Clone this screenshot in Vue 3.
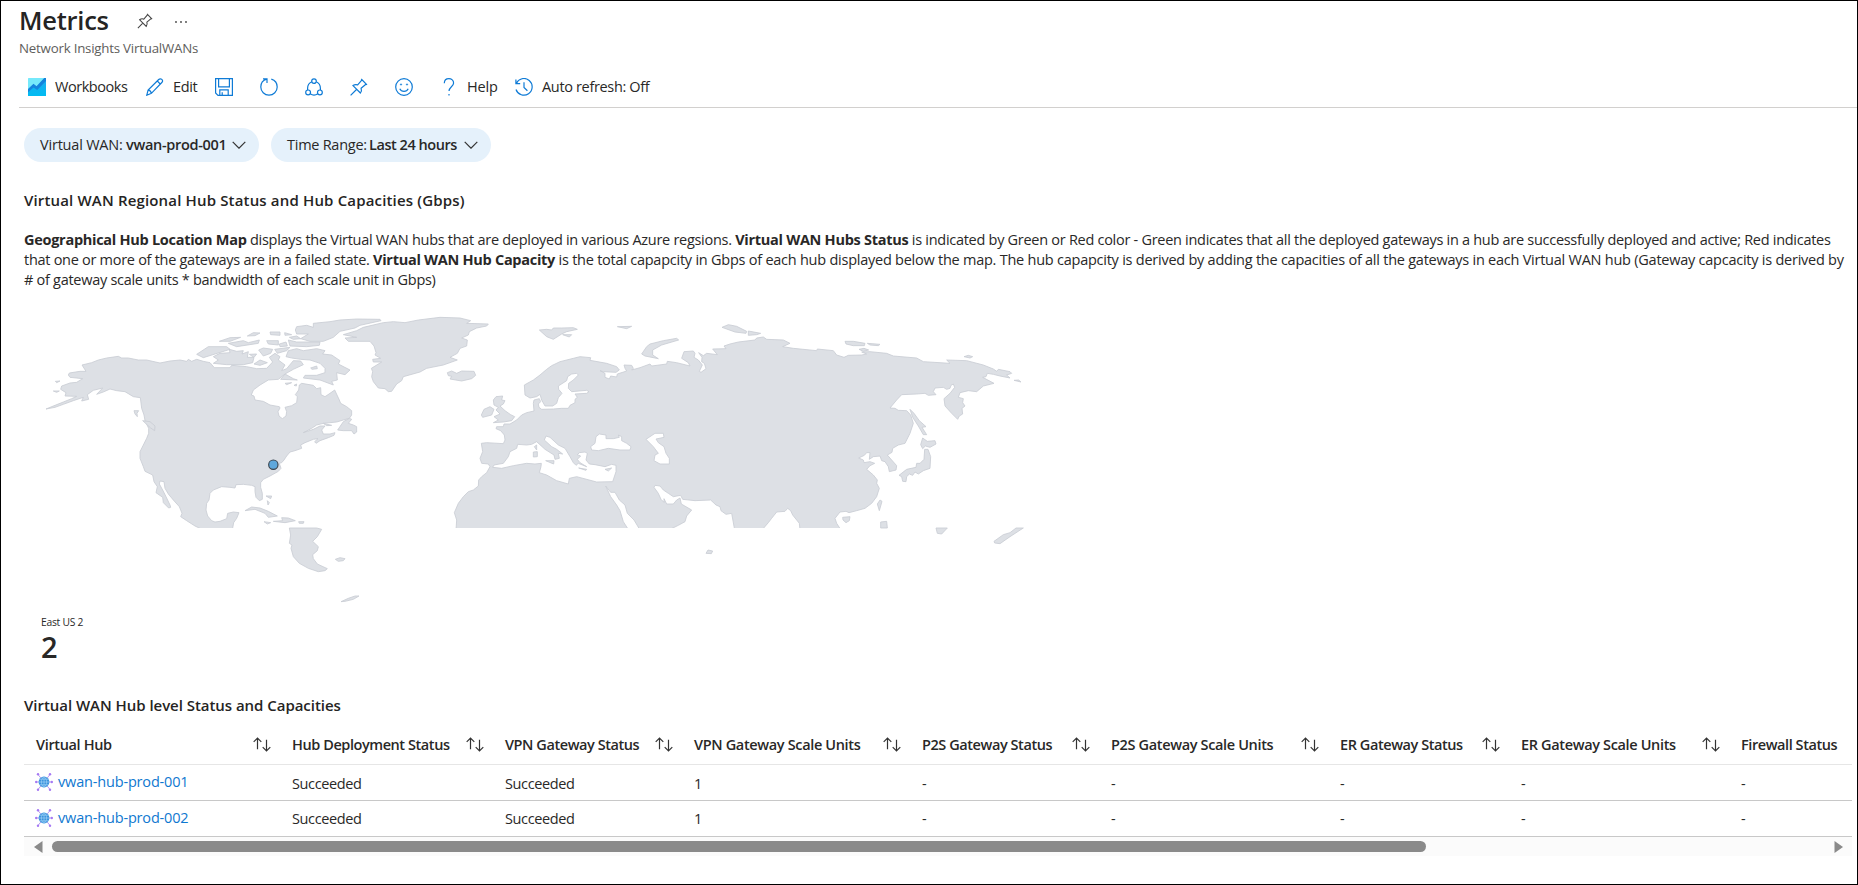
<script setup>
const columns = [
  { label: 'Virtual Hub' },
  { label: 'Hub Deployment Status', tight: true },
  { label: 'VPN Gateway Status', tight: true },
  { label: 'VPN Gateway Scale Units' },
  { label: 'P2S Gateway Status', tight: true },
  { label: 'P2S Gateway Scale Units' },
  { label: 'ER Gateway Status', tight: true },
  { label: 'ER Gateway Scale Units' },
  { label: 'Firewall Status', tight: true },
]
const rows = [
  ['vwan-hub-prod-001', 'Succeeded', 'Succeeded', '1', '-', '-', '-', '-', '-'],
  ['vwan-hub-prod-002', 'Succeeded', 'Succeeded', '1', '-', '-', '-', '-', '-'],
]

// Coastline data is kept in three regional tiles; each tile is moved into the shared map space.
const shift = (points, dx) =>
  points.trim().split(/\s+/).map((p) => {
    const [x, y] = p.split(',').map(Number)
    return `${x + dx},${y}`
  }).join(' ')
const ring = (...parts) => 'M' + parts.map(([dx, pts]) => shift(pts, dx)).join(' L') + 'Z'
const WEST = 0, MID = 930, EAST = 1830

const eurasia = ring(
  [MID, `348,690 350,660 343,638 355,610 370,590 385,575 400,570 415,558 416,540 425,530 440,518 450,500 445,492 425,490 420,475 428,455 424,430 440,428 490,431 495,420 493,405 482,392 468,386 470,380 490,380 492,372 510,372 530,360 545,345 560,338 582,333 580,310 582,300 598,296 602,305 595,312 597,322 605,328 640,327 665,325 685,325 690,316 705,308 705,298 712,292 705,282 740,280 747,275 740,271 695,275 685,265 686,250 700,240 715,225 710,220 695,222 683,230 680,242 655,258 656,268 666,280 655,293 650,310 638,318 615,318 605,300 600,283 590,290 570,294 555,285 553,255 580,240 600,225 620,208 635,197 660,185 700,175 720,170 752,173 750,181 800,190 830,200 838,210 828,217 790,215 780,212 795,220 795,232 808,237 812,228 830,231 832,222 860,213 855,205 852,195 875,196 880,205 875,210 900,203 930,192`],
  [EAST, `30,192 35,198 80,192 82,184 110,188 150,198 145,188 125,175 132,155 160,153 165,160 162,172 175,180 187,195 178,214 183,217 198,206 193,190 185,185 186,172 176,158 190,167 200,160 232,164 218,147 258,146 252,138 270,132 295,126 345,120 350,114 370,111 380,118 430,120 450,130 428,140 460,145 530,152 532,147 580,152 590,165 612,172 625,166 665,165 680,162 665,156 690,155 740,160 760,168 830,174 850,185 930,190 920,180 980,182 1030,195 1060,207 1070,214 1075,208 1110,215 1115,220 1100,225 1110,234 1080,228 1060,223 1042,220 1038,230 1028,232 1062,250 1030,258 1010,275 985,272 960,278 955,292 970,296 968,308 975,318 966,325 968,342 958,348 953,358 935,340 915,318 912,296 930,280 944,262 940,252 933,256 930,265 920,268 910,262 885,264 880,275 888,284 865,286 855,280 830,282 785,284 770,300 750,324 765,325 775,331 800,332 812,345 820,370 810,400 795,430 775,435 758,445 756,457 742,465 755,480 770,497 768,510 748,515 745,500 735,485 725,482 720,468 700,470 688,478 690,458 680,458 673,466 656,474 670,480 672,488 690,485 704,490 690,497 680,508 700,525 712,540 710,550 718,565 710,590 695,610 675,625 650,632 627,638 618,634 600,636 585,655 590,670 603,690 480,690 478,670 458,645 452,632 443,625 435,634 410,636 395,655 385,668 366,690 284,690 275,640 258,643 243,632 240,620 228,615 212,600 165,602 128,598 122,586 100,590 85,580 70,570 60,558 45,556 42,562 55,580 63,598 72,607 72,596 80,612 100,612 110,600 120,594 124,612 155,630 140,648 135,665 115,676 86,690`],
  [MID, `900,690 882,660 862,640 855,615 838,600 825,577 812,577 797,558 812,590 830,615 840,632 850,665 866,690`],
)
const seas = [
  ring([MID, `458,502 485,505 520,497 560,490 585,492 604,490 603,500 598,518 620,525 650,542 685,552 688,535 710,530 770,546 818,545 828,515 828,496 815,493 795,500 765,494 748,492 738,480 742,460 735,456 718,458 712,464 722,468 712,478 720,488 740,500 715,490 708,496 700,488 690,470 675,445 655,435 630,412 618,408 613,420 635,440 650,448 668,462 655,460 658,475 645,478 642,465 615,448 590,425 575,433 560,435 533,433 530,445 510,455 505,470 490,490 462,495`]),
  ring([MID, `778,402 798,405 798,416 820,416 838,412 835,405 845,410 845,422 860,430 873,440 870,450 840,450 805,445 775,452 755,450 752,440 765,430 768,410`]),
  ring([EAST, `18,418 45,400 70,400 72,412 48,417 55,428 72,440 78,460 88,475 88,492 60,492 42,482 45,465 55,460 40,440`]),
]
const land = [
  // North America
  ring([WEST, `48,327 75,316 100,306 125,296 140,289 105,288 108,278 92,268 95,258 120,249 140,247 158,236 120,232 115,225 118,219 150,214 168,214 156,195 185,188 205,180 230,174 265,169 275,174 295,174 325,180 350,180 390,189 420,183 450,180 470,184 475,178 485,184 500,178 520,184 540,188 553,203 600,203 605,196 650,200 680,206 710,205 728,186 718,172 735,160 750,170 745,180 765,195 755,212 770,206 790,182 812,183 820,194 790,208 765,222 745,238 715,240 690,255 670,270 664,285 672,288 675,300 700,304 720,315 748,320 750,324 744,335 747,348 757,356 768,348 770,335 765,322 785,317 800,308 802,290 796,284 806,270 808,255 815,250 850,256 860,266 872,263 873,284 885,290 900,280 914,270 928,300 932,310 950,320 965,332 965,345 958,355 940,360 920,366 880,370 860,375 845,385 820,398 850,388 870,378 885,378 875,390 880,402 900,402 915,398 912,406 895,413 870,422 858,430 854,425 864,416 850,418 825,428 812,435 815,445 795,452 780,456 770,468 762,480 755,488 748,490 753,505 745,514 720,528 700,538 692,548 692,562 697,580 697,598 688,602 678,592 675,575 675,560 665,556 640,553 618,554 615,564 600,562 575,560 550,570 540,580 537,600 530,610 528,630 533,648 545,662 555,666 570,664 590,656 593,640 610,636 627,638 620,655 611,668 607,690 520,690 495,678 470,662 452,650 456,640 448,620 430,600 415,582 405,565 402,545 390,543 388,552 398,570 408,590 420,615 422,622 416,624 400,608 398,592 378,578 382,560 372,545 368,525 345,514 340,500 330,475 330,455 340,435 350,415 356,400 356,385 345,362 342,345 335,325 331,293 310,290 285,275 260,272 240,267 220,276 200,283 218,264 190,271 172,284 176,298 155,303 160,292 130,302 100,313 75,322`]),
  ring([WEST, `338,362 360,365 375,378 374,392 362,384`]),
  ring([WEST, `312,332 326,332 321,340 322,350 315,342`]),
  ring([WEST, `923,390 940,365 958,355 965,358 955,370 970,375 980,380 980,396 972,402 965,392 940,392`]),
  ring([WEST, `880,370 905,376 890,377`]),
  ring([WEST, `76,244 90,243 80,248`]), ring([WEST, `70,273 88,273 80,277`]),
  // Canadian Arctic
  ring([WEST, `500,163 535,140 590,140 600,148 555,162 520,173`]),
  ring([WEST, `550,170 570,160 600,158 598,148 620,154 640,152 636,162 655,155 652,172 672,172 668,188 640,194 590,194 550,190 565,180`]),
  ring([WEST, `568,124 600,113 632,112 600,124`]), ring([WEST, `595,130 640,122 655,128 688,120 685,130 620,140`]),
  ring([WEST, `652,108 670,98 690,99 675,107`]), ring([WEST, `658,163 680,162 672,172`]),
  ring([WEST, `686,150 700,144 728,148 722,160 700,168`]), ring([WEST, `710,122 745,122 745,135 715,132`]),
  ring([WEST, `720,96 750,96 750,106 722,104`]), ring([WEST, `764,98 785,104 765,106`]),
  ring([WEST, `778,112 800,108 812,116 790,118`]), ring([WEST, `734,148 780,142 770,152 742,160`]),
  ring([WEST, `748,132 768,126 772,138 750,140`]), ring([WEST, `672,192 690,180 712,188 690,196`]),
  ring([WEST, `775,120 800,126 870,126 868,136 830,140 780,138`]),
  ring([WEST, `796,90 800,80 830,76 850,82 850,70 900,65 930,60 980,57 1050,58`], [MID, `123,62 60,76 45,84 0,94`], [WEST, `910,112 880,124 840,124 812,116 835,102 800,102`]),
  ring([WEST, `768,170 775,152 800,146 820,152 860,146 885,152 878,162 905,165 930,182 925,192 960,210 945,224 920,218 922,240 905,244 910,255 870,240 820,234 825,226 860,226 885,218 885,205 870,190 840,180 812,178 785,174`]),
  ring([WEST, `842,204 860,198 862,206 846,208`]), ring([WEST, `752,238 765,222 790,236 802,240`]),
  ring([WEST, `765,250 785,248 770,254`]), ring([WEST, `792,256 800,252 799,258`]),
  // Caribbean
  ring([WEST, `645,632 665,621 690,624 715,634 742,648 715,652 705,640 675,628`]),
  ring([WEST, `702,665 722,668 712,672`]), ring([WEST, `730,664 758,662 755,653 775,654 796,662 765,668`]),
  ring([WEST, `806,665 822,665 820,670 808,670`]), ring([WEST, `708,588 725,588 722,596`]), ring([WEST, `712,602 718,608 714,615`]),
  // Southern fragments
  ring([WEST, `778,684 860,684 875,688 862,710 848,724 865,740 862,752 848,764 850,776 862,792 892,806 885,812 865,815 835,805 808,790 790,770 783,745 786,735 778,730 782,705`]),
  ring([WEST, `916,778 930,773 945,776 940,782 925,784`]), ring([WEST, `933,905 955,895 975,888 987,888 970,898 945,904`]),
  // Greenland and Iceland
  ring([MID, `10,104 50,92 70,82 130,68 160,65 195,68 210,65 235,60 300,52 360,54 392,62 380,70 445,72 440,78 410,84 388,95 385,105 365,114 382,120 380,138 360,145 352,160 330,172 352,180 310,195 260,205 240,216 190,230 185,242 170,252 155,274 145,275 135,266 115,264 100,245 95,230 98,215 94,205 125,186 100,186 98,178 122,175 105,165 108,158 102,138 90,124 25,124 15,114 50,112`]),
  ring([MID, `322,218 335,213 350,220 365,213 402,214 407,226 395,236 365,243 330,237 335,229 325,227`]),
  // British Isles
  ring([MID, `460,300 468,290 488,288 485,300 495,302 490,312 480,318 495,332 512,344 524,350 515,362 490,366 460,368 475,360 462,350 480,342 468,330 475,322 462,315`]),
  ring([MID, `424,345 432,328 450,320 462,328 455,345 428,352`]),
  // Mediterranean islands
  ring([MID, `617,482 642,482 641,492`]), ring([MID, `580,456 592,455 592,470 580,471`]), ring([MID, `583,440 590,435 590,450`]),
  ring([MID, `716,504 740,508 738,511`]), ring([MID, `795,508 815,504 805,513`]),
  // Russian Arctic
  ring([MID, `598,90 620,88 635,90 640,84 665,84 700,83 712,88 680,95 665,102 640,118 620,110`]),
  ring([MID, `668,104 695,104 688,111`]), ring([MID, `832,80 875,79 860,86`]),
  ring([EAST, `5,162 20,140 30,132 70,122 110,115 116,120 65,135 38,150 38,165 55,176 15,168`]),
  ring([EAST, `246,82 265,74 290,79 320,94 318,100 285,96`]), ring([EAST, `325,93 362,100 350,104 325,106`]),
  ring([EAST, `615,124 640,124 675,130 673,137 640,137 618,132`]), ring([EAST, `682,130 720,133 715,137 690,135`]),
  ring([EAST, `657,148 672,145 686,150 670,154`]),
  ring([EAST, `972,170 985,166 998,170 990,174`]), ring([EAST, `1122,241 1136,240 1143,246`]),
  // Japan and the western Pacific
  ring([EAST, `810,328 822,340 838,362 858,380 846,382 860,404 850,404 835,378 818,352`]),
  ring([EAST, `848,414 862,424 885,422 888,432 870,442 856,438 848,446 842,434`]),
  ring([EAST, `854,448 864,448 872,470 870,505 850,512 835,522 825,516 818,526 808,522 800,530 798,545 788,544 785,530 777,526 800,508 828,502 830,490 840,490 852,478`]),
  ring([EAST, `712,612 720,600 726,604 718,632`]), ring([EAST, `608,652 630,650 628,662 618,668 609,660`]),
  ring([EAST, `722,684 722,666 740,664 742,684`]),
  ring([EAST, `888,684 922,684 905,702 892,700`]), ring([EAST, `198,760 204,750 218,753 214,761`]),
  ring([EAST, `1062,724 1090,704 1110,698 1128,684 1150,684 1110,710 1080,731 1064,729`]),
]
</script>

<template>
  <main class="page">
    <header class="head">
      <div class="title-row">
        <h1>Metrics</h1>
        <svg class="pin-small" viewBox="0 0 18 18"><path d="M11.2 1l5.8 5.8M12 1.8L7.7 6.9C5.9 6.2 4.3 6.6 3 7.6l7.4 7.4c1-1.3 1.4-2.9.7-4.7l5.1-4.3M6.5 11.5L1 17" /></svg>
        <svg class="dots" viewBox="0 0 14 4"><circle cx="2" cy="2" r="0.9" /><circle cx="7" cy="2" r="0.9" /><circle cx="12" cy="2" r="0.9" /></svg>
      </div>
      <div class="subtitle">Network Insights VirtualWANs</div>
    </header>

    <nav class="toolbar">
      <button class="tool w-workbooks">
        <svg viewBox="0 0 18 18" class="filled">
          <defs>
            <linearGradient id="wb" x1="0" y1="0" x2="0" y2="1"><stop offset="0" stop-color="#1fa9ee" /><stop offset="1" stop-color="#00bcf2" /></linearGradient>
          </defs>
          <rect width="18" height="18" rx="0.6" fill="#76e9fb" />
          <path d="M0 12L5.5 6.3l3.2 2.4L16 1l2-.8V18H0z" fill="url(#wb)" />
          <path d="M0 14.2V11l5.500-5.200 3 2.500L16.200 0H18v2.900l-8.800 9-3.600-2.500z" fill="#1583dc" />
        </svg>
        <span class="wb-label">Workbooks</span>
      </button>
      <button class="tool w-edit">
        <svg viewBox="0 0 18 18"><path d="M.8 17.2l1.3-5.1L12.7 1.5c1-1 2.3-.9 3.1-.1s.9 2.2 0 3.1L5.4 15.3zM11.3 3l3.3 3.3M2.1 12.1c1.7.2 2.9 1.4 3.3 3.2" /></svg>
        <span>Edit</span>
      </button>
      <button class="tool w-icon"><svg viewBox="0 0 18 18"><path d="M.6.6h16.8v16.8H3L.6 15zM3.6.6v8.2h10.8V.6M4.8 17.4v-5.6h8.4v5.6M7.2 14.2v3.2" /></svg></button>
      <button class="tool w-icon"><svg viewBox="0 0 18 18"><path d="M3 .9h4v4M6.7 1.2C3.3 2.2.8 5.2.8 9a8.2 8.2 0 0 0 16.4 0c0-3.8-2.5-6.9-5.9-7.9" /></svg></button>
      <button class="tool w-icon"><svg viewBox="0 0 18 18"><circle cx="9" cy="3.1" r="2.3" /><circle cx="3.1" cy="14.4" r="2.4" /><circle cx="14.9" cy="14.4" r="2.4" /><path d="M6.8 3.8C4.3 4.9 2.6 7.3 2.6 10.200v1.800M11.200 3.800c2.500 1.100 4.200 3.500 4.200 6.400v1.800M5.200 15.800c2.200 1.500 5.400 1.500 7.600 0" /></svg></button>
      <button class="tool w-icon"><svg viewBox="0 0 18 18"><path d="M11.2 1l5.8 5.8M12 1.8L7.7 6.9C5.9 6.2 4.3 6.6 3 7.6l7.4 7.4c1-1.3 1.4-2.9.7-4.7l5.1-4.3M6.5 11.5L.6 17.4" /></svg></button>
      <button class="tool w-icon"><svg viewBox="0 0 18 18"><circle cx="9" cy="9" r="8.3" /><path d="M4.8 10.8c1.6 3.4 6.8 3.4 8.4 0" /><circle cx="6" cy="6.5" r=".7" class="dot" /><circle cx="12" cy="6.5" r=".7" class="dot" /></svg></button>
      <button class="tool w-help">
        <svg viewBox="0 0 18 18"><path d="M4.3 5.3C4.3 2.4 6.2.7 8.9.7s4.7 1.7 4.7 4.2c0 3.6-4.6 4.1-4.6 8.2M9 16v1.6" /></svg>
        <span class="help-label">Help</span>
      </button>
      <button class="tool">
        <svg viewBox="0 0 18 18"><path d="M.9 1.5v4.2h4.3M1.3 5.4A8.3 8.3 0 1 1 1 11.5M9 4.3v5.2l3.400 3.300" /></svg>
        <span>Auto refresh: Off</span>
      </button>
    </nav>

    <section class="filters">
      <div class="pill p1"><span class="k1">Virtual WAN:</span><b class="v1">vwan-prod-001</b><svg viewBox="0 0 14 8"><path d="M.7.9L7 7.2 13.3.9" /></svg></div>
      <div class="pill p2"><span class="k2">Time Range:</span><b class="v2">Last 24 hours</b><svg viewBox="0 0 14 8"><path d="M.7.9L7 7.2 13.3.9" /></svg></div>
    </section>

    <h2 class="h-first">Virtual WAN Regional Hub Status and Hub Capacities (Gbps)</h2>

    <div class="desc">
      <div><b>Geographical Hub Location Map</b> displays the Virtual WAN hubs that are deployed in various Azure regsions. <b>Virtual WAN Hubs Status</b> is indicated by Green or Red color - Green indicates that all the deployed gateways in a hub are successfully deployed and active; Red indicates</div>
      <div>that one or more of the gateways are in a failed state. <b>Virtual WAN Hub Capacity</b> <span class="wide">is the total capapcity in Gbps of each hub displayed below the map. The hub capapcity is derived by adding the capacities of all the gateways in each Virtual WAN hub (Gateway capcacity is derived by</span></div>
      <div># of gateway scale units * bandwidth of each scale unit in Gbps)</div>
    </div>

    <svg class="map" viewBox="0 0 3030 960">
      <defs>
        <clipPath id="north"><rect x="0" y="0" width="3030" height="684" /></clipPath>
      </defs>
      <g class="land">
        <path :d="eurasia + seas.join('')" fill-rule="evenodd" clip-path="url(#north)" />
        <path v-for="(d, i) in land" :key="i" :d="d" :clip-path="i === 0 ? 'url(#north)' : undefined" />
      </g>
      <circle class="hub" cx="730" cy="494" r="14" />
    </svg>

    <div class="tile">
      <div class="tile-name">East US 2</div>
      <div class="tile-value">2</div>
    </div>

    <h2 class="h-second">Virtual WAN Hub level Status and Capacities</h2>

    <section class="table">
      <div class="row thead">
        <div v-for="(c, i) in columns" :key="c.label" class="cell">
          <span :class="{ tight: c.tight }">{{ c.label }}</span>
          <svg v-if="i < 8" class="sort" viewBox="0 0 18 15"><path d="M4.500 12.200V1M.7 4.800L4.500 1l3.800 3.800M13.500 2.800V14M9.700 10.200l3.800 3.800 3.800-3.800" /></svg>
        </div>
      </div>
      <div v-for="(r, ri) in rows" :key="r[0]" class="row body" :class="'r' + ri">
        <div v-for="(c, i) in r" :key="i" class="cell">
          <template v-if="i === 0">
            <svg class="hubicon" viewBox="0 0 18 18">
              <path class="spokes" d="M3 1.500L15 16.500M15 1.500L3 16.500M1 9h16" />
              <g class="ends"><circle cx="3" cy="1.300" r="1.200" /><circle cx="15" cy="1.300" r="1.200" /><circle cx="3" cy="16.700" r="1.200" /><circle cx="15" cy="16.700" r="1.200" /><circle cx="1.200" cy="9" r="1.200" /><circle cx="16.800" cy="9" r="1.200" /></g>
              <circle cx="9" cy="9" r="5.400" fill="#3c93dd" />
              <path class="globe" d="M3.600 9h10.800M4.500 6.200h9M4.500 11.800h9M9 3.600v10.800M9 3.600c-3.500 3-3.500 7.800 0 10.800M9 3.600c3.500 3 3.500 7.800 0 10.800" />
            </svg>
            <a>{{ c }}</a>
          </template>
          <span v-else>{{ c }}</span>
        </div>
      </div>
      <div class="scroll">
        <svg class="arrow" viewBox="0 0 9 12"><path d="M8.500 0v12L0 6z" /></svg>
        <div class="track"><div class="thumb"></div></div>
        <svg class="arrow" viewBox="0 0 9 12"><path d="M.5 0v12L9 6z" /></svg>
      </div>
    </section>
  </main>
</template>

<style>
body { background: #fff; }
</style>

<style scoped>
* { box-sizing: border-box; }
.page { width: 1858px; height: 885px; border: 1px solid #000; background: #fff; color: #292827; font-family: "Open Sans", "Noto Sans", sans-serif; font-size: 14.5px; overflow: hidden; display: flex; flex-direction: column; white-space: nowrap; }
.page > * { flex: none; }
h1, h2 { margin: 0; color: #252423; }
svg { display: block; fill: none; flex: none; }
.head { height: 66px; padding-left: 18px; }
.title-row { display: flex; height: 40px; }
h1 { font-size: 25.5px; font-weight: 600; line-height: 38px; width: 118px; letter-spacing: -0.25px; }
.pin-small { width: 16px; height: 16px; margin-top: 12px; stroke: #444; stroke-width: 1.2; }
.dots { width: 14px; height: 4px; margin: 18.5px 0 0 21px; fill: #444; }
.subtitle { color: #605e5c; font-size: 13.3px; line-height: 18px; margin-top: -2px; letter-spacing: -0.22px; }
.toolbar { height: 41px; margin-left: 18px; padding-left: 9px; display: flex; align-items: center; border-bottom: 1px solid #d2d0ce; }
.tool { display: flex; align-items: center; gap: 9px; border: 0; background: none; padding: 0 0 1px; font: inherit; color: inherit; height: 40px; letter-spacing: -0.34px; }
.tool svg { width: 18px; height: 18px; stroke: #0f7bd6; stroke-width: 1.2; }
.tool svg.filled { stroke: none; }
.tool .dot { fill: #0f7bd6; stroke-width: 0.5; }
.wb-label { letter-spacing: -0.46px; }
.help-label { letter-spacing: -0.15px; }
.w-workbooks { width: 118px; }
.w-edit { width: 69px; }
.w-icon { width: 45px; }
.w-help { width: 75px; }
.filters { margin: 20px 0 0 23px; display: flex; gap: 12px; height: 34px; }
.pill { background: #e5f1fb; border-radius: 17px; display: flex; align-items: center; line-height: 34px; padding: 0 0 1px 16px; }
.p1 { width: 235px; }
.p2 { width: 220px; }
.pill b { font-weight: 600; }
.k1 { width: 86px; letter-spacing: -0.2px; }
.v1 { width: 106px; letter-spacing: -0.32px; }
.k2 { width: 82px; letter-spacing: -0.26px; }
.v2 { width: 95px; letter-spacing: -0.45px; }
.pill svg { width: 14px; height: 8px; stroke: #333; stroke-width: 1.2; }
h2 { font-size: 15px; font-weight: 600; padding-left: 23px; line-height: 22px; }
.h-first { margin-top: 27px; letter-spacing: 0.16px; }
.desc { margin: 19px 0 0 23px; line-height: 20px; letter-spacing: -0.283px; }
.desc b { font-weight: 700; letter-spacing: -0.28px; }
.desc .wide { letter-spacing: -0.243px; }
.map { width: 1010px; height: 320px; margin: 10px 0 0 29px; }
.land path { fill: #dde0e5; stroke: #c9cdd4; stroke-width: 2.5; stroke-linejoin: round; }
.hub { fill: #5fa8dc; stroke: #3b4650; stroke-width: 3.5; }
.tile { padding-left: 40px; margin-top: -4px; height: 60px; }
.tile-name { font-size: 10.3px; line-height: 13px; letter-spacing: -0.25px; }
.tile-value { font-size: 29px; font-weight: 600; line-height: 36px; }
.h-second { margin-top: 18px; letter-spacing: -0.04px; }
.table { margin: 9px 0 0 23px; width: 1828px; }
.row { display: grid; grid-template-columns: 256px 213px 189px 228px 189px 229px 181px 220px 123px; }
.cell { padding: 0 9px 0 12px; display: flex; align-items: center; }
.thead { height: 40px; border-bottom: 1px solid #e6e6e6; font-weight: 600; line-height: 39px; letter-spacing: -0.35px; }
.thead .cell { justify-content: space-between; }
.thead .tight { letter-spacing: -0.43px; }
.sort { width: 18px; height: 15px; stroke: #333; stroke-width: 1.2; }
.body { height: 36px; border-bottom: 1px solid #c8c8c8; letter-spacing: -0.38px; }
.body .cell:first-child { padding-bottom: 2px; }
.r0 .cell:not(:first-child) { padding-top: 2px; }
.hubicon { width: 18px; height: 18px; margin: 0 5px 0 -1px; }
.spokes { stroke: #b79af0; stroke-width: 1; }
.ends { fill: #a67af4; }
.globe { stroke: #a9d8f8; stroke-width: 0.6; }
a { color: #0f78d0; letter-spacing: -0.17px; }
.scroll { height: 19px; background: #fbfbfb; display: flex; align-items: center; justify-content: space-between; padding: 0 9px 0 10px; }
.arrow { width: 9px; height: 12px; fill: #8a8a8a; }
.track { width: 1773px; }
.thumb { width: 1374px; height: 11px; border-radius: 6px; background: #8a8a8a; }
</style>
